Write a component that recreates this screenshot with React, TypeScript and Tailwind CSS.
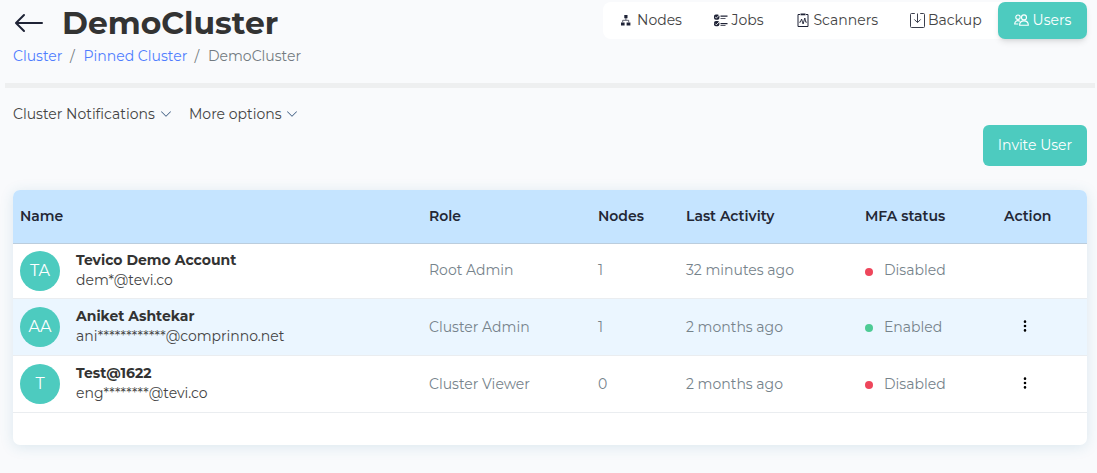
import React from "react";
import { BsArrowLeft, BsChevronDown, BsThreeDotsVertical } from "react-icons/bs";

function NodesIcon() {
  return (
    <svg width="10" height="11" viewBox="0 0 10 11" className="shrink-0" fill="#1f2336">
      <path d="M3.3 0h3.2v3.2H3.3zM0 7.4h3.6v3.2H0zM5.6 7.4h3.8v3.2H5.6z" />
      <path d="M4.9 3v2.2M1.7 7.3V5.3h6v2" fill="none" stroke="#1f2336" strokeWidth="0.7" />
    </svg>
  );
}

function JobsIcon() {
  return (
    <svg width="14" height="13" viewBox="0 0 14 13" className="shrink-0" fill="#1f2336">
      <rect x="0" y="0.5" width="5.4" height="5.2" rx="1.8" />
      <rect x="0" y="7.1" width="5.4" height="5.2" rx="1.8" />
      <path d="M1.2 3l1.1 1.1L5.6.8M1.2 9.7l1.1 1.1 3.3-3.3" fill="none" stroke="#fff" strokeWidth="0.9" />
      <path d="M6.5 1.4h7v1.4h-7zM6.5 3.9h5v.8h-5zM6.5 8.9h7v1.4h-7zM6.5 11.2h5v.7H6.5z" />
    </svg>
  );
}

function ScannersIcon() {
  return (
    <svg width="12" height="14" viewBox="0 0 12 14" className="shrink-0" fill="none" stroke="#1f2336">
      <path d="M3 1.5H1v12h10v-12H9" />
      <path d="M3.5 0.5h5v1.8h-5z" fill="#1f2336" stroke="none" />
      <path d="M2.3 9.2h1L4.6 6l1.5 5 1.7-6 1 4.2h1" strokeWidth="0.9" />
    </svg>
  );
}

function BackupIcon() {
  return (
    <svg width="15" height="15" viewBox="0 0 15 15" className="shrink-0" fill="none" stroke="#3b3f4d" strokeWidth="1">
      <path d="M4.8 0.5H1.5a1 1 0 0 0-1 1v12a1 1 0 0 0 1 1h12a1 1 0 0 0 1-1v-12a1 1 0 0 0-1-1h-3.3M7.5 0.5v8.8M4.3 6.4l3.2 3.2 3.2-3.2" />
    </svg>
  );
}

function UsersIcon() {
  return (
    <svg width="15" height="12" viewBox="0 0 15 12" className="shrink-0" fill="none" stroke="#fff" strokeWidth="1.15">
      <circle cx="4" cy="3.2" r="2.2" />
      <circle cx="10" cy="3.4" r="2.5" />
      <path d="M5.6 11.2c0-5.7 8.7-5.7 8.7 0zM6 7.2C3.3 5.7.7 7.1.7 10h3.6" />
    </svg>
  );
}

const rows = [
  { initials: "TA", name: "Tevico Demo Account", email: "dem*@tevi.co", role: "Root Admin", nodes: "1", last: "32 minutes ago", on: false, status: "Disabled", action: false, cls: "h-[55px]", cell: "-mt-0.5" },
  { initials: "AA", name: "Aniket Ashtekar", email: "ani************@comprinno.net", role: "Cluster Admin", nodes: "1", last: "2 months ago", on: true, status: "Enabled", action: true, cls: "h-[57px] bg-[#ebf6ff]", cell: "" },
  { initials: "T", name: "Test@1622", email: "eng********@tevi.co", role: "Cluster Viewer", nodes: "0", last: "2 months ago", on: false, status: "Disabled", action: true, cls: "h-[57px]", cell: "" },
];

const columns = "grid grid-cols-[409px_169px_88px_179px_139px_1fr] items-center pl-[7px]";

export default function App() {
  return (
    <div className="h-[473px] w-[1097px] overflow-hidden bg-[#f9fafc] font-['Montserrat','Inter',sans-serif] text-[14px] leading-5 text-[#444]">
      <header className="flex h-[83px] justify-between pr-2.5 pl-[13px]">
        <div>
          <div className="flex h-[46px] items-center">
            <BsArrowLeft size={32} className="w-[49px] shrink-0 pr-[17px] text-[#1f2336]" />
            <h1 className="text-[31.4px] leading-[46px] font-bold whitespace-nowrap text-[#333]">DemoCluster</h1>
          </div>
          <nav className="flex whitespace-nowrap text-[#737a81]">
            <span className="w-[57px] text-[#4f7dff]">Cluster</span>
            <span className="w-[13.5px]">/</span>
            <span className="w-[111px] text-[#4f7dff]">Pinned Cluster</span>
            <span className="w-[13.5px]">/</span>
            <span>DemoCluster</span>
          </nav>
        </div>
        <nav className="mt-0.5 flex h-[37px] w-[484px] items-center rounded-lg bg-white pb-px whitespace-nowrap">
          <span className="flex w-[110.5px] items-center gap-[6px] pl-[18px]"><NodesIcon />Nodes</span>
          <span className="flex w-[83px] items-center gap-1"><JobsIcon />Jobs</span>
          <span className="flex w-[113.5px] items-center gap-[5px]"><ScannersIcon />Scanners</span>
          <span className="flex w-[88px] items-center gap-[3px]"><BackupIcon />Backup</span>
          <span className="mt-px flex h-[37px] w-[89px] shrink-0 items-center justify-center gap-1 rounded-[7px] bg-[#4dcbbf] pb-px text-white shadow-md"><UsersIcon />Users</span>
        </nav>
      </header>
      <div className="mr-0.5 ml-[5px] h-[5px] bg-[#eeeff0]" />
      <div className="flex h-[37px] items-end pl-[13px] whitespace-nowrap">
        <div className="flex h-[21px] w-[176px] items-start gap-1"><span className="w-[143px]">Cluster Notifications</span><BsChevronDown size={12} className="mt-1 text-[#35557c]" /></div>
        <div className="flex h-[21px] items-start gap-1"><span className="w-[93px]">More options</span><BsChevronDown size={12} className="mt-1 text-[#35557c]" /></div>
      </div>
      <div className="flex h-[65px] justify-end pr-2.5">
        <button className="h-[41px] w-[104px] rounded-md bg-[#4dcbbf] pb-0.5 whitespace-nowrap text-white">Invite User</button>
      </div>
      <main className="mr-2.5 ml-[13px] h-[255px] overflow-hidden rounded-[7px] bg-white shadow-[0_2px_14px_rgba(50,130,160,0.15)]">
        <div className={columns + " h-[54px] border-b border-[#bbcddd] bg-[#c5e4ff] pb-0.5 font-semibold text-[#232735]"}>
          <span>Name</span><span>Role</span><span>Nodes</span><span>Last Activity</span><span>MFA status</span><span>Action</span>
        </div>
        {rows.map((r) => (
          <div key={r.name} className={columns + " border-b border-[#eaedf0] text-[#76838b] whitespace-nowrap " + r.cls}>
            <div className="flex items-center gap-4">
              <span className="flex size-10 shrink-0 items-center justify-center rounded-full bg-[#4dcbbf] text-[16px] text-white">{r.initials}</span>
              <div className="-mt-0.5 text-[#444]">
                <div className="font-bold text-[#333]">{r.name}</div>
                <div>{r.email}</div>
              </div>
            </div>
            <span className={r.cell}>{r.role}</span>
            <span className={r.cell}>{r.nodes}</span>
            <span className={r.cell}>{r.last}</span>
            <span className="flex items-center gap-[11px]"><i className={"mt-px size-2 rounded-full " + (r.on ? "bg-[#4dcb95]" : "bg-[#ee465b]")} /><span className={r.cell}>{r.status}</span></span>
            <span className="pl-3.5">{r.action && <BsThreeDotsVertical size={14} className="-mt-0.5 text-black" />}</span>
          </div>
        ))}
      </main>
    </div>
  );
}
